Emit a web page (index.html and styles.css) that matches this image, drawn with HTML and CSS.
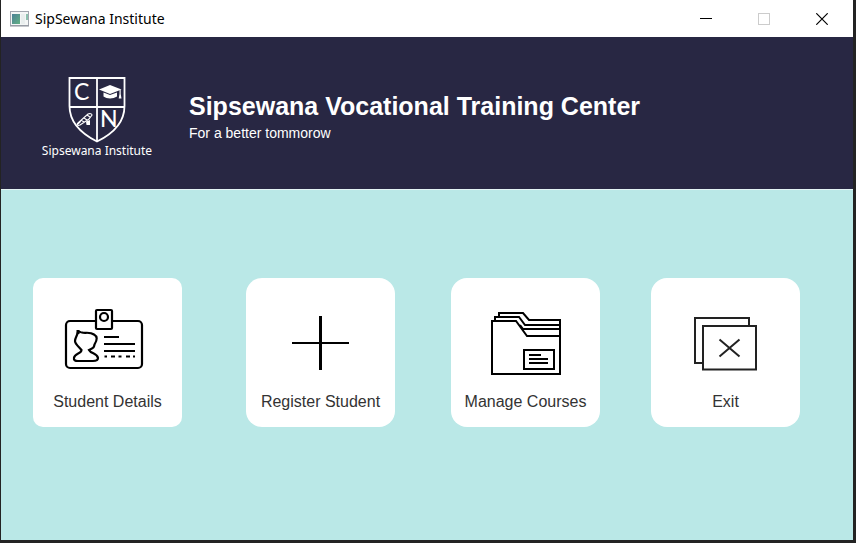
FILE: index.html
```html
<!DOCTYPE html>
<html lang="en">
<head>
<meta charset="utf-8">
<title>SipSewana Institute</title>
<link rel="stylesheet" href="styles.css">
</head>
<body>
<div class="window">
  <div class="titlebar">
    <svg class="app-icon" width="20" height="16" viewBox="0 0 20 16" aria-hidden="true">
      <defs><linearGradient id="pane" x1="0" y1="0" x2="1" y2="1"><stop offset="0" stop-color="#4c8197"/><stop offset="1" stop-color="#62b083"/></linearGradient></defs>
      <rect x="0.500" y="0.5" width="18" height="14" fill="#f4f6f6" stroke="#a2a6af"/>
      <path d="M0 15h19" stroke="#8d929b"/>
      <rect x="2" y="3" width="8" height="10" fill="url(#pane)"/>
      <rect x="11" y="3" width="4" height="10" fill="#e9eeee"/>
      <rect x="16" y="3" width="2" height="6" fill="#8cc0ae"/>
    </svg>
    <span class="window-title">SipSewana Institute</span>
    <div class="window-controls">
      <button type="button" aria-label="Minimize"><svg width="12" height="12" viewBox="0 0 12 12"><path d="M0 5.5h12" stroke="#000"/></svg></button>
      <button type="button" aria-label="Maximize" disabled><svg width="12" height="12" viewBox="0 0 12 12"><rect x=".5" y=".5" width="11" height="11" fill="none" stroke="#ccc"/></svg></button>
      <button type="button" aria-label="Close"><svg width="12" height="12" viewBox="0 0 12 12"><path d="M.3.3l11.4 11.4M11.7.3L.3 11.7" stroke="#000" stroke-width="1.2"/></svg></button>
    </div>
  </div>

  <header class="banner">
    <div class="logo">
      <svg width="58" height="66" viewBox="0 0 58 66" fill="none" stroke="#fff" aria-hidden="true">
        <path d="M1.500 1h55v28c0 16-12 28-27.500 35.500C14 57 1.500 45 1.500 29z" stroke-width="1.8"/>
        <path d="M29 1v63M1.500 30h55" stroke-width="1.8"/>
        <text class="crest-letter" x="6" y="23">C</text>
        <text class="crest-letter crest-letter-strong" x="32" y="50">N</text>
        <g fill="#fff" stroke="none">
          <path d="M31 12.500l11-4.500 11.500 4.500L42 17z"/>
          <path d="M35.500 15.500l6.500 2.500 7-2.500v4c-4 2.500-10 2.500-13.500 0z"/>
          <path d="M51.500 13h1.200v4l.8 4.500h-2.800l.8-4.500z"/>
          <path d="M18 44.500l4-1.500v5h-3.500z"/>
        </g>
        <path d="M10 46l10-9c2-1 4 0 4 1l-3 4-9 6c-2 1-4 0-2-2zM13 43l3 2M16 41l3 2M19 38l3 2M9 48l4-4" stroke-width="1.100"/>
      </svg>
      <span class="logo-name">Sipsewana Institute</span>
    </div>
    <div class="heading">
      <h1>Sipsewana Vocational Training Center</h1>
      <p>For a better tommorow</p>
    </div>
  </header>

  <main class="menu">
    <button type="button" class="card card-tight">
      <svg width="89" height="68" viewBox="0 0 89 68" fill="none" stroke="#000" stroke-width="2.200" aria-hidden="true">
        <rect x="3" y="13" width="76" height="47" rx="4"/>
        <rect x="33" y="2" width="16" height="19" rx="1" fill="#fff"/>
        <circle cx="41" cy="9" r="4"/>
        <path d="M15 24c-.5 3-3 6-3 9 0 3 4 6 6.500 9 0 4-7 3-7.500 8-.5 2 1 3 4 3h15c4 0 5-1 5-3-1-5-7-4-9-8 5-2 5-3 5.500-5.500 3-5 3-8-.5-10-4-3-9-1-12-2-2 0-3-2-4-.5z"/>
        <path d="M15 22v4" stroke-width="3"/>
        <path d="M41 29h15M41 36h31M41 43h31" stroke-width="2"/>
        <path d="M41.500 48.500h2.500M48 48.500h4M55.500 48.500h3M63 48.500h4M70 48.500h2"/>
      </svg>
      <span>Student Details</span>
    </button>
    <button type="button" class="card">
      <svg width="81" height="68" viewBox="0 0 81 68" aria-hidden="true">
        <path d="M12 35h57" stroke="#000" stroke-width="2"/><path d="M40.500 8v54" stroke="#000" stroke-width="3"/>
      </svg>
      <span>Register Student</span>
    </button>
    <button type="button" class="card">
      <svg width="73" height="68" viewBox="0 0 73 68" fill="none" stroke="#000" stroke-width="2" aria-hidden="true">
        <path d="M3 13h24l11 15h33v38H3z"/>
        <path d="M6 13V9h24l6 8h35M10 9V5h24l6 7h31v17M31 17l3 4h37"/>
        <path d="M35 42h30v19H35z"/>
        <path d="M40 47h12M40 51h19M40 55h19"/>
      </svg>
      <span>Manage Courses</span>
    </button>
    <button type="button" class="card">
      <svg width="65" height="68" viewBox="0 0 65 68" fill="none" stroke="#222" stroke-width="2" aria-hidden="true">
        <path d="M10 55H2V10h54v8"/>
        <path d="M10 18h53v43.500H10z"/>
        <path d="M26.500 31.500l20 17M46.500 31.500l-20 17"/>
      </svg>
      <span>Exit</span>
    </button>
  </main>
</div>
</body>
</html>
```
FILE: styles.css
```css
* {
  box-sizing: border-box;
}

body {
  margin: 0;
  font-family: "Liberation Sans", Arial, sans-serif;
  background: #232323;
}

.window {
  display: flex;
  flex-direction: column;
  min-height: 100vh;
  border: solid #232323;
  border-width: 0 3px 3px 1px;
}

.titlebar {
  display: flex;
  align-items: center;
  height: 37px;
  padding-left: 9px;
  background: #fff;
}

.window-title {
  margin-left: 5px;
  font: 14px/20px "Noto Sans", sans-serif;
  color: #000;
}

.window-controls {
  display: flex;
  align-self: stretch;
  margin-left: auto;
  padding-right: 2px;
}

.window-controls button {
  display: flex;
  align-items: center;
  justify-content: center;
  width: 58px;
  padding: 0;
  border: 0;
  background: none;
}

.banner {
  display: flex;
  align-items: flex-start;
  height: 153px;
  padding: 40px 40px 0;
  border-bottom: 1px solid #e4f4f4;
  background: #282743;
  color: #fff;
}

.logo {
  display: flex;
  flex-direction: column;
  align-items: center;
  width: 112px;
}

.logo-name {
  font: 12px/16px "Noto Sans", sans-serif;
  white-space: nowrap;
}

.crest-letter {
  font: 23px Lato, sans-serif;
  fill: #fff;
  stroke: none;
}

.crest-letter-strong {
  font-weight: 500;
}

.heading {
  margin: 13px 0 0 36px;
}

h1 {
  margin: 0;
  font-size: 25px;
  line-height: 32px;
}

.heading p {
  margin: 3px 0 0;
  font-size: 14px;
  line-height: 16px;
}

.menu {
  display: grid;
  grid-template-columns: 213fr 205fr 200fr 149fr;
  flex: 1;
  align-content: start;
  padding: 88px 53px 88px 32px;
  background: #bae8e7;
}

.card {
  display: flex;
  flex-direction: column;
  align-items: center;
  gap: 16px;
  width: 149px;
  height: 149px;
  padding: 30px 0 0;
  border: 0;
  border-radius: 16px;
  background: #fff;
  color: #333;
  font: 16px/20px "Liberation Sans", Arial, sans-serif;
}

.card-tight {
  border-radius: 10px;
}
```
